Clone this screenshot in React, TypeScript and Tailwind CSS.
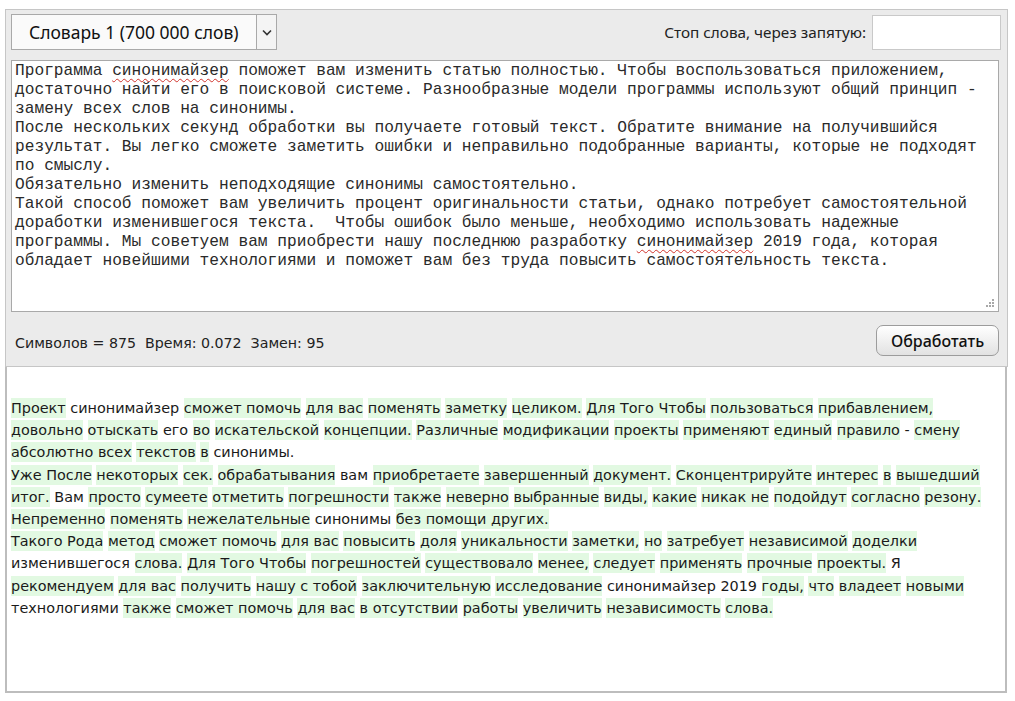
import React from "react";

const sourceLines = [
  "Программа {синонимайзер} поможет вам изменить статью полностью. Чтобы воспользоваться приложением,",
  "достаточно найти его в поисковой системе. Разнообразные модели программы используют общий принцип -",
  "замену всех слов на синонимы.",
  "После нескольких секунд обработки вы получаете готовый текст. Обратите внимание на получившийся",
  "результат. Вы легко сможете заметить ошибки и неправильно подобранные варианты, которые не подходят",
  "по смыслу.",
  "Обязательно изменить неподходящие синонимы самостоятельно.",
  "Такой способ поможет вам увеличить процент оригинальности статьи, однако потребует самостоятельной",
  "доработки изменившегося текста.  Чтобы ошибок было меньше, необходимо использовать надежные",
  "программы. Мы советуем вам приобрести нашу последнюю разработку {синонимайзер} 2019 года, которая",
  "обладает новейшими технологиями и поможет вам без труда повысить самостоятельность текста.",
];

// [..] = replaced word (green background)
const resultLines = [
  "[Проект] синонимайзер [сможет помочь] [для вас] [поменять] [заметку] [целиком.] [Для Того Чтобы] [пользоваться] [прибавлением,]",
  "[довольно] [отыскать] его [во] [искательской] [концепции.] [Различные] [модификации] [проекты] [применяют] [единый] [правило] - [смену]",
  "[абсолютно всех] [текстов] [в] синонимы.",
  "[Уже После] [некоторых] [сек.] [обрабатывания] вам [приобретаете] [завершенный] [документ.] [Сконцентрируйте] [интерес] [в] [вышедший]",
  "[итог.] Вам [просто] [сумеете] [отметить] [погрешности] [также] [неверно] [выбранные] [виды,] [какие] [никак не] [подойдут] [согласно] [резону.]",
  "[Непременно] [поменять] [нежелательные] синонимы [без помощи других.]",
  "[Такого Рода] [метод] [сможет помочь] [для вас] [повысить] [доля] [уникальности] [заметки,] [но] [затребует] [независимой] [доделки]",
  "изменившегося [слова.] [Для Того Чтобы] [погрешностей] [существовало] [менее,] [следует] [применять] [прочные] [проекты.] Я",
  "[рекомендуем] [для вас] [получить] [нашу с тобой] [заключительную] [исследование] синонимайзер 2019 [годы,] [что] [владеет] [новыми]",
  "технологиями [также] [сможет помочь] [для вас] [в отсутствии] [работы] [увеличить] [независимость] [слова.]",
];

const split = (line: string, re: RegExp) => line.split(re).filter((p) => p !== "");

const SourceLine = ({ text }: { text: string }) => (
  <div className="h-[19px]">
    {split(text, /(\{[^}]+\})/).map((part, i) =>
      part.startsWith("{") ? (
        <span key={i} className="underline decoration-wavy decoration-[#d0342c] decoration-1 underline-offset-[3px]">
          {part.slice(1, -1)}
        </span>
      ) : (
        <span key={i}>{part}</span>
      )
    )}
  </div>
);

const ResultLine = ({ text }: { text: string }) => (
  <div className="h-[22.2px]">
    {split(text, /(\[[^\]]+\])/).map((part, i) =>
      part.startsWith("[") ? (
        <span key={i} className="bg-[#e2f9e2] py-[2px]">
          {part.slice(1, -1)}
        </span>
      ) : (
        <span key={i}>{part}</span>
      )
    )}
  </div>
);

const ResizeGrip = () => (
  <svg width="9" height="9" viewBox="0 0 9 9" className="absolute right-[4px] bottom-[4px]">
    {[
      [7, 1], [7, 4], [4, 4], [7, 7], [4, 7], [1, 7],
    ].map(([x, y], i) => (
      <rect key={i} x={x} y={y} width="2" height="2" fill="#a8a8a8" />
    ))}
  </svg>
);

export default function App() {
  return (
    <div className="min-h-screen bg-white pt-[9px] pl-[5px] font-['Noto_Sans',sans-serif] text-[#111]">
      {/* Panel with source text */}
      <div className="w-[1003px] border border-[#c6c6c6] bg-[#ebebeb] pl-[5px] pr-[8px] pt-[4px] pb-[10px]">
        <div className="flex items-center justify-between">
          <div className="flex h-[36px] w-[266px] border border-[#a9a9a9] bg-[#fafafa]">
            <div className="flex flex-1 items-center pl-[17px] text-[17.5px] text-[#111]">Словарь 1 (700 000 слов)</div>
            <div className="flex w-[20px] items-center justify-center border-l border-[#a9a9a9] bg-[#f4f4f4]">
              <svg width="10" height="7" viewBox="0 0 10 7">
                <path d="M1 1.5 L5 5.5 L9 1.5" fill="none" stroke="#333" strokeWidth="1.6" />
              </svg>
            </div>
          </div>
          <div className="-mr-[2px] flex items-center gap-[6px]">
            <span className="text-[15.3px] text-[#222]">Стоп слова, через запятую:</span>
            <div className="h-[35px] w-[129px] border border-[#c9c9c9] bg-white" />
          </div>
        </div>

        <div className="relative mt-[10px] h-[252px] w-[988px] border border-[#a9a9a9] bg-white pt-[1px] pl-[3px] font-['Liberation_Mono',monospace] text-[16.2px] leading-[19px] whitespace-pre text-[#2a2a2a]">
          {sourceLines.map((l, i) => (
            <SourceLine key={i} text={l} />
          ))}
          <ResizeGrip />
        </div>

        <div className="mt-[13px] flex items-center justify-between">
          <span className="pl-[4px] pt-[7px] font-['DejaVu_Sans',sans-serif] text-[14.2px] text-[#222]">Символов = 875&nbsp; Время: 0.072&nbsp; Замен: 95</span>
          <button className="h-[31px] w-[123px] rounded-[7px] border border-[#9c9c9c] bg-gradient-to-b from-white to-[#e2e2e2] text-[16px] font-medium text-[#111] shadow-[inset_0_1px_0_#fff]">
            Обработать
          </button>
        </div>
      </div>

      {/* Result */}
      <div className="h-[326px] w-[1002px] border-2 border-t-0 border-[#bdbdbd] bg-white pl-[4px] pt-[31px] font-['DejaVu_Sans',sans-serif] text-[14.4px] whitespace-pre text-[#1a1a1a]">
        {resultLines.map((l, i) => (
          <ResultLine key={i} text={l} />
        ))}
      </div>
    </div>
  );
}
